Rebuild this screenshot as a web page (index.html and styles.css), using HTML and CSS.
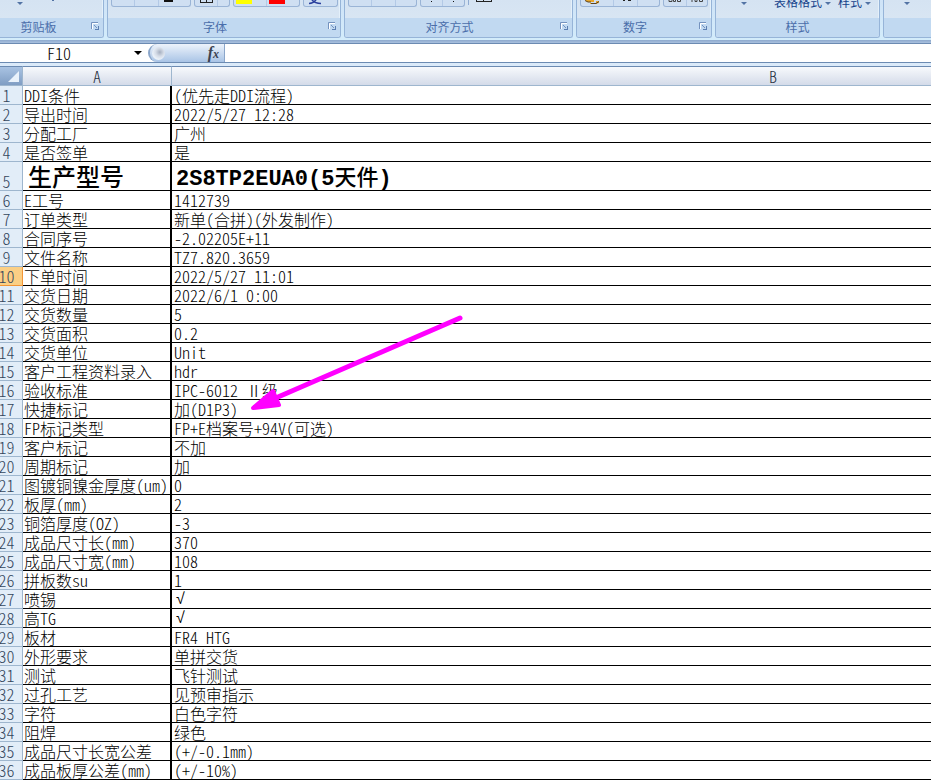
FILE: index.html
```
<!DOCTYPE html>
<html lang="zh-CN">
<head>
  <meta charset="UTF-8">
  <title>F10</title>
  <link rel="stylesheet" href="styles.css">
</head>
<body>
  <div class="ribbon">
    <section class="group group-clipboard">
      <div class="tools">
        <svg width="90" height="7"><path d="M22 2h6l-3 3z" fill="#5273a4"/><path d="M57 0h2v1h-2z" fill="#5273a4"/></svg>
      </div>
      <div class="caption"><span>剪贴板</span><button class="launcher" aria-label="剪贴板"><svg width="9" height="9"><use href="#launch"/></svg></button></div>
    </section>
    <section class="group group-font">
      <div class="tools">
        <button class="tool" aria-label="下划线"><svg width="78" height="6"><path d="M22.500 0v6M46.500 0v6" stroke="#b3c9e6"/><path d="M52 0h9v2h-9z" fill="#111"/></svg></button>
        <button class="tool" aria-label="边框"><svg width="34" height="6"><path d="M5 2.500h13M5.500 0v2M11.500 0v2M17.500 0v2" stroke="#222"/><path d="M22.500 0v6" stroke="#b3c9e6"/></svg></button>
        <button class="tool" aria-label="颜色"><svg width="65" height="6"><path d="M2 0h16v4H2z" fill="#ff0"/><path d="M35 0h16v4H35z" fill="#f00"/><path d="M32.500 0v6" stroke="#b3c9e6"/></svg></button>
        <button class="tool" aria-label="拼音"><svg width="33" height="6"><path d="M5 3.500q4 0 7-3.500M8 0q3 3.500 9 3.500" fill="none" stroke="#2a3f9d" stroke-width="1.500"/></svg></button>
      </div>
      <div class="caption"><span>字体</span><button class="launcher" aria-label="字体"><svg width="9" height="9"><use href="#launch"/></svg></button></div>
    </section>
    <section class="group group-align">
      <div class="tools">
        <button class="tool" aria-label="对齐"><svg width="67" height="6"><path d="M22.500 0v6M46.500 0v6" stroke="#b3c9e6"/></svg></button>
        <button class="tool" aria-label="缩进"><svg width="43" height="6"><path d="M10 1h1v1h-1zM32 1h1v1h-1z" fill="#111"/><path d="M21.500 0v6" stroke="#b3c9e6"/></svg></button>
        <svg width="30" height="6"><path d="M.5 0v5" stroke="#8fabd2"/><path d="M8 1.500h16M8.500 0v1M15.500 0v1M23.500 0v1" stroke="#222"/></svg>
      </div>
      <div class="caption"><span>对齐方式</span><button class="launcher" aria-label="对齐方式"><svg width="9" height="9"><use href="#launch"/></svg></button></div>
    </section>
    <section class="group group-number">
      <div class="tools">
        <button class="tool" aria-label="货币"><svg width="78" height="6"><path d="M4 0h9v2H6zM9 3h6V1h3v2l-3 1h-6z" fill="#e9a72b"/><path d="M4 .5l3 1.500h3M10 3.500h5l3-2" fill="none" stroke="#5c4421"/><path d="M32.500 0v6M56.500 0v6" stroke="#b3c9e6"/><path d="M42 .5h2M47 .5h3" stroke="#222"/></svg></button>
        <button class="tool" aria-label="小数位数"><svg width="43" height="6"><path d="M5 0v1.500h3V0M9.500 0v1.500h2V0M13.500 0v1.500h3V0M28 0v2M31 0v1.500h2V0M35.500 0v1.500h3V0" fill="none" stroke="#444"/><path d="M22.500 0v6" stroke="#b3c9e6"/></svg></button>
      </div>
      <div class="caption"><span>数字</span><button class="launcher" aria-label="数字"><svg width="9" height="9"><use href="#launch"/></svg></button></div>
    </section>
    <section class="group group-style">
      <div class="tools tools-text">
        <svg class="drop" width="6" height="9"><use href="#down"/></svg>
        <span class="menu">表格格式<svg class="drop" width="6" height="9"><use href="#down"/></svg></span>
        <span class="menu">样式<svg class="drop" width="6" height="9"><use href="#down"/></svg></span>
      </div>
      <div class="caption"><span>样式</span></div>
    </section>
    <section class="group group-cells">
      <div class="tools tools-cells"><svg class="drop" width="6" height="9"><use href="#down"/></svg></div>
      <div class="caption"></div>
    </section>
  </div>

  <div class="formula-bar">
    <input class="name-box" type="text" value="F10" aria-label="名称框">
    <button class="name-drop" aria-label="名称列表"><svg width="8" height="4"><path d="M0 0h8L4 4z" fill="#000"/></svg></button>
    <button class="fx" aria-label="插入函数">
      <span class="knob"></span>
      <em>f<small>x</small></em>
    </button>
    <input class="formula" type="text" aria-label="编辑栏">
  </div>

  <main class="sheet">
    <table>
      <colgroup><col class="col-head"><col class="col-a"><col class="col-b"></colgroup>
      <thead>
        <tr><th class="corner"><svg width="11" height="11"><path d="M11 0v11H0z" fill="#e9f2fb"/></svg></th><th>A</th><th>B</th></tr>
      </thead>
      <tbody>
        <tr><th>1</th><td>DDI条件</td><td>(优先走DDI流程)</td></tr>
        <tr><th>2</th><td>导出时间</td><td>2022/5/27 12:28</td></tr>
        <tr><th>3</th><td>分配工厂</td><td>广州</td></tr>
        <tr><th>4</th><td>是否签单</td><td>是</td></tr>
        <tr class="model"><th>5</th><td>生产型号</td><td>2S8TP2EUA0(5<span class="han">天件</span>)</td></tr>
        <tr><th>6</th><td>E工号</td><td>1412739</td></tr>
        <tr><th>7</th><td>订单类型</td><td>新单(合拼)(外发制作)</td></tr>
        <tr><th>8</th><td>合同序号</td><td>-2.02205E+11</td></tr>
        <tr><th>9</th><td>文件名称</td><td>TZ7.820.3659</td></tr>
        <tr class="current"><th>10</th><td>下单时间</td><td>2022/5/27 11:01</td></tr>
        <tr><th>11</th><td>交货日期</td><td>2022/6/1 0:00</td></tr>
        <tr><th>12</th><td>交货数量</td><td>5</td></tr>
        <tr><th>13</th><td>交货面积</td><td>0.2</td></tr>
        <tr><th>14</th><td>交货单位</td><td>Unit</td></tr>
        <tr><th>15</th><td>客户工程资料录入</td><td>hdr</td></tr>
        <tr><th>16</th><td>验收标准</td><td>IPC-6012 Ⅱ级</td></tr>
        <tr><th>17</th><td>快捷标记</td><td>加(D1P3)</td></tr>
        <tr><th>18</th><td>FP标记类型</td><td>FP+E档案号+94V(可选)</td></tr>
        <tr><th>19</th><td>客户标记</td><td>不加</td></tr>
        <tr><th>20</th><td>周期标记</td><td>加</td></tr>
        <tr><th>21</th><td>图镀铜镍金厚度(um)</td><td>0</td></tr>
        <tr><th>22</th><td>板厚(mm)</td><td>2</td></tr>
        <tr><th>23</th><td>铜箔厚度(OZ)</td><td>-3</td></tr>
        <tr><th>24</th><td>成品尺寸长(mm)</td><td>370</td></tr>
        <tr><th>25</th><td>成品尺寸宽(mm)</td><td>108</td></tr>
        <tr><th>26</th><td>拼板数su</td><td>1</td></tr>
        <tr class="checked"><th>27</th><td>喷锡</td><td>√</td></tr>
        <tr class="checked"><th>28</th><td>高TG</td><td>√</td></tr>
        <tr><th>29</th><td>板材</td><td>FR4 HTG</td></tr>
        <tr><th>30</th><td>外形要求</td><td>单拼交货</td></tr>
        <tr><th>31</th><td>测试</td><td>飞针测试</td></tr>
        <tr><th>32</th><td>过孔工艺</td><td>见预审指示</td></tr>
        <tr><th>33</th><td>字符</td><td>白色字符</td></tr>
        <tr><th>34</th><td>阻焊</td><td>绿色</td></tr>
        <tr><th>35</th><td>成品尺寸长宽公差</td><td>(+/-0.1mm)</td></tr>
        <tr><th>36</th><td>成品板厚公差(mm)</td><td>(+/-10%)</td></tr>
      </tbody>
    </table>
    <!-- 标注箭头 -->
    <svg class="arrow" width="220" height="100">
      <path d="M210 10L28 89" stroke="#f0f" stroke-width="5" stroke-linecap="round"/>
      <path d="M3 100L23 83L29 97Z" fill="#f0f" stroke="#f0f" stroke-width="4" stroke-linejoin="round"/>
    </svg>
  </main>

  <svg class="defs" width="0" height="0">
    <symbol id="launch" viewBox="0 0 9 9"><path d="M.5 7V.5H7" fill="none" stroke="#7492be"/><path d="M1.500 7V1.500H7" fill="none" stroke="#fff"/><path d="M3 3l3 3" stroke="#7492be"/><path d="M4 8V7h3V4h1v4z" fill="#5c7fb2"/></symbol>
    <symbol id="down" viewBox="0 0 6 9"><path d="M0 2h6L3 5z" fill="#5273a4"/></symbol>
  </svg>
</body>
</html>
```
FILE: styles.css
```
* {
  box-sizing: border-box;
}
body {
  margin: 0;
  background: #fff;
  color: #000;
  font-family: "Noto Sans CJK SC", sans-serif;
  font-size: 16px;
  font-feature-settings: "hwid";
  overflow: hidden;
}
button {
  padding: 0;
  border: 0;
  background: none;
}
svg {
  display: block;
}
.defs {
  position: absolute;
}

/* ribbon */
.ribbon {
  display: flex;
  gap: 3px;
  height: 44px;
  margin-left: -9px;
  padding-bottom: 6px;
  background: linear-gradient(#cfe3f7 0, #d3ecfb 40px, #8da9cd 40px, #a9c1df 43px, #6c8bb2 43px);
  overflow: hidden;
}
.group {
  flex: none;
  display: flex;
  flex-direction: column;
  border: 1px solid #96b4d8;
  border-top: 0;
  border-radius: 0 0 3px 3px;
  background: linear-gradient(#d5e3f2, #dbe8f4);
  box-shadow: inset -1px 0 0 #e4f0fa;
}
.group-clipboard {
  width: 113px;
}
.group-font {
  width: 234px;
}
.group-align {
  width: 229px;
}
.group-number {
  width: 136px;
}
.group-style {
  width: 165px;
}
.group-cells {
  width: 165px;
}
.tools {
  display: flex;
  gap: 3px;
  height: 18px;
  padding: 0 3px;
}
.tool {
  height: 7px;
  border: 1px solid #9ab4d6;
  border-top: 0;
  border-radius: 0 0 3px 3px;
  background: #cfdff2;
}
.tools-text {
  justify-content: flex-end;
  align-items: flex-start;
  gap: 7px;
  padding-right: 8px;
  overflow: hidden;
}
.tools-text > .drop {
  margin-right: 20px;
}
.tools-cells {
  padding-left: 20px;
}
.menu {
  display: flex;
  gap: 3px;
  margin-top: -7px;
  color: #15428b;
  font-size: 12px;
  line-height: 18px;
}
.menu .drop {
  margin-top: 7px;
}
.caption {
  display: flex;
  height: 19px;
  border-radius: 0 0 2px 2px;
  background: #c1d9f1;
  color: #4a6eaa;
  font-size: 12px;
  line-height: 18px;
}
.caption span {
  flex: 1;
  text-align: center;
}
.launcher {
  width: 18px;
  height: 16px;
}
.launcher svg {
  margin-left: 6px;
}

/* formula bar */
.formula-bar {
  display: flex;
  height: 19px;
  border-bottom: 1px solid #6c8bb2;
  background: #fff;
}
.formula-bar input {
  min-width: 0;
  padding: 0;
  border: 0;
  outline: 0;
  font: inherit;
  font-weight: 300;
  font-feature-settings: inherit;
}
.name-box {
  width: 118px;
  text-align: center;
}
.name-drop {
  display: flex;
  align-items: center;
  justify-content: center;
  width: 30px;
  padding-left: 10px;
}
.fx {
  display: flex;
  align-items: center;
  justify-content: space-between;
  width: 77px;
  padding: 0 5px 0 2px;
  border: 1px solid #8ba6ca;
  border-width: 0 1px 0 2px;
  border-radius: 10px 0 0 10px;
  background: linear-gradient(#edf3fb, #a9c4e6);
  color: #3b4250;
}
.knob {
  width: 13px;
  height: 13px;
  border-radius: 50%;
  background: radial-gradient(circle at 60% 40%, #a5afc0 0, #d5dce7 4px, #e9f0f8 7px);
}
.fx em {
  font: italic bold 16px/16px "Liberation Serif", serif;
}
.fx small {
  font-size: 12px;
}
.formula {
  flex: 1;
}

/* sheet */
.sheet {
  position: relative;
  border-top: 3px solid #dbeaf9;
  overflow: hidden;
}
table {
  table-layout: fixed;
  width: 1384px;
  margin-left: -9px;
  border-spacing: 0;
}
.col-head {
  width: 32px;
}
.col-a {
  width: 149px;
}
th,
td {
  height: 19px;
  padding: 0;
  font-weight: 300;
  line-height: 18px;
  vertical-align: bottom;
  white-space: nowrap;
}
thead th {
  height: 20px;
  border-top: 1px solid #6c8bb2;
  border-right: 1px solid #9eb6ce;
  border-bottom: 1px solid #9eb6ce;
  background: linear-gradient(#f7f9fc, #d4dbe9);
  color: #27313f;
}
thead .corner {
  padding: 0 3px 3px 0;
  background: linear-gradient(#a9c3e3, #7f9dc3);
}
.corner svg {
  margin-left: auto;
}
tbody th {
  border-right: 1px solid #9eb6ce;
  border-bottom: 1px solid #9eb6ce;
  background: #e2edf8;
  color: #33465c;
}
td {
  padding-left: 1px;
  border-bottom: 1px solid #000;
}
td:nth-child(2) {
  border-right: 2px solid #000;
}
td:last-child {
  padding-left: 2px;
}
.model td {
  height: 29px;
  padding-left: 5px;
  font-size: 24px;
  font-weight: 500;
  line-height: 24px;
  vertical-align: middle;
}
.model td:last-child {
  padding-top: 3px;
  padding-left: 4px;
  font-family: "Liberation Mono", monospace;
  font-size: 22px;
  font-weight: 700;
  line-height: 20px;
}
.model .han {
  font-family: "Noto Sans CJK SC", sans-serif;
  font-weight: 500;
  line-height: 18px;
}
.checked td:last-child {
  padding-left: 4px;
  font-family: "DejaVu Sans", sans-serif;
}
.current th {
  border-color: #f29536;
  background: #fbcf85;
}
.arrow {
  position: absolute;
  left: 250px;
  top: 242px;
  overflow: visible;
}
```
